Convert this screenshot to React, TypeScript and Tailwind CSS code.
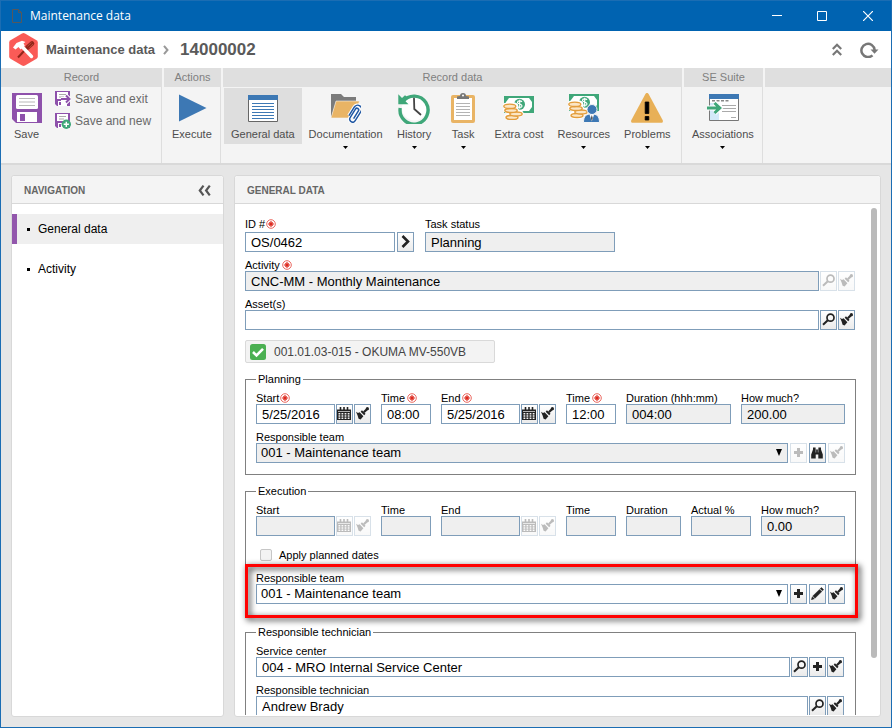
import React, { useId } from "react";

/* ---------- small glyphs used on field buttons ---------- */

function SearchIcon() {
  return (
    <svg width="13" height="13" viewBox="0 0 13 13" fill="none" stroke="currentColor">
      <circle cx="8.5" cy="4.7" r="3.5" strokeWidth="1.7" />
      <path d="M5.8 7.2 1 11.8" strokeWidth="2" />
    </svg>
  );
}

function BrushIcon() {
  return (
    <svg width="13" height="13" viewBox="0 0 13 13">
      <path d="M11.6 1.600 7.800 5.200" stroke="currentColor" strokeWidth="2.200" />
      <circle cx="11.400" cy="1.700" r="1.600" fill="currentColor" />
      <path d="M5.900 3.200 9.500 6.800 8.200 8.300 4.700 4.700Z" fill="currentColor" />
      <path d="M0 4.800 2 6 3.600 5.200 7.400 9.200 4.600 12.600 2.600 11.800 1.600 8.600Z" fill="currentColor" />
    </svg>
  );
}

function CalendarIcon() {
  return (
    <svg width="14" height="14" viewBox="0 0 14 14">
      <path d="M0 2.500h14V13H0z" fill="currentColor" />
      <path d="M3.500 0v3M7 0v3M10.500 0v3" stroke="currentColor" strokeWidth="1.600" />
      <path d="M1 4.500h12" stroke="#f4f4f4" strokeWidth=".7" />
      <path
        d="M1.500 6h1.800v1.400H1.500zM4.500 6h1.800v1.400H4.500zM7.600 6h1.800v1.400H7.600zM10.700 6h1.800v1.400H10.700zM1.500 8.300h1.800v1.400H1.500zM4.500 8.300h1.800v1.400H4.500zM7.600 8.300h1.800v1.400H7.600zM10.700 8.300h1.800v1.400H10.700zM1.500 10.600h1.800V12H1.500zM4.500 10.600h1.800V12H4.500zM7.600 10.600h1.800V12H7.600zM10.700 10.600h1.800V12H10.700z"
        fill="#f4f4f4"
      />
    </svg>
  );
}

function PlusIcon() {
  return (
    <svg width="9" height="9" viewBox="0 0 9 9">
      <path d="M3 0h3v3h3v3H6v3H3V6H0V3h3z" fill="currentColor" />
    </svg>
  );
}

function PencilIcon() {
  return (
    <svg width="13" height="13" viewBox="0 0 13 13">
      <path d="M10.4.6 12.6 2.6 11.5 3.8 9.2 1.7ZM8.5 2.4 10.8 4.6 4 11.2 1.8 9ZM1.3 9.8 3.3 11.7.4 12.7Z" fill="currentColor" stroke="currentColor" strokeWidth=".5" />
    </svg>
  );
}

function BinocularsIcon() {
  return (
    <svg width="12" height="12" viewBox="0 0 12 12">
      <path d="M2 .5h2.600v2h2.800v-2H10v2l1.800 5v4H7.300V7.500H4.700v4H.2v-4l1.800-5z" fill="currentColor" />
      <path d="M4.800 2.500v3M7.200 2.500v3" stroke="#f4f4f4" strokeWidth=".5" />
    </svg>
  );
}

function ChevronIcon() {
  return (
    <svg width="9" height="13" viewBox="0 0 9 13" fill="none">
      <path d="M1.500 1 7 6.500 1.500 12" stroke="currentColor" strokeWidth="2.600" />
    </svg>
  );
}

function Required() {
  return (
    <svg width="10" height="10" viewBox="0 0 10 10" className="mb-px shrink-0" aria-hidden="true">
      <circle cx="5" cy="5" r="4.300" fill="#fff" stroke="#e8574e" strokeWidth=".9" />
      <path d="M5 2v6M2 5h6M3.300 3.300l3.400 3.400M6.700 3.300 3.300 6.700" stroke="#dd2a1f" strokeWidth="1.100" />
    </svg>
  );
}

/* ---------- ribbon drawings ---------- */

function FloppyIcon() {
  return (
    <svg width="30" height="30" viewBox="0 0 30 30">
      <path d="M0 0h30v30H4L0 26z" fill="#8e51ab" />
      <rect x="4" y="2" width="22" height="14" rx="1.500" fill="#fff" />
      <path d="M7 5.500h16M7 9h16M7 12.500h16" stroke="#b9b9b9" strokeWidth="1" />
      <path d="M5 19h20v10H5z" fill="#fff" />
      <path d="M8 21h5v7H8z" fill="#8e51ab" />
    </svg>
  );
}

function SmallFloppy({ kind }: { kind: "exit" | "new" }) {
  return (
    <svg width="16" height="16" viewBox="0 0 16 16">
      <path d="M0 0h15v15H2l-2-2z" fill="#8e51ab" />
      <path d="M2 1h11v7H2zM3 10h9v5H3z" fill="#fff" />
      <path d="M4 3.500h7M4 6h5" stroke="#aaa" />
      <path d="M4 11h2v3H4z" fill="#8e51ab" />
      {kind === "exit" ? (
        <>
          <path d="M6 8h8M11 4.500 14.500 8 11 11.500" fill="none" stroke="#fff" strokeWidth="4" />
          <path d="M6 8h8M11 4.500 14.500 8 11 11.500" fill="none" stroke="#8e51ab" strokeWidth="2" />
        </>
      ) : (
        <>
          <circle cx="11.300" cy="11.300" r="4.700" fill="#3fa779" />
          <path d="M11.300 8.700v5.200M8.700 11.300h5.200" stroke="#fff" strokeWidth="1.400" />
        </>
      )}
    </svg>
  );
}

function PlayIcon() {
  return (
    <svg width="30" height="30" viewBox="0 0 30 30">
      <path d="M2 1.500 29.500 15 2 28.500z" fill="#3d78b4" />
    </svg>
  );
}

function DocIcon() {
  return (
    <svg width="30" height="30" viewBox="0 0 30 30">
      <path d="M.5 3.500h29v25H.5z" fill="#fff" stroke="#666" />
      <path d="M0 2h30v5H0z" fill="#3d78b4" />
      <path d="M4 10.500h22M4 13.500h22M4 16.500h22M4 19.500h22M4 22.500h22M4 25.500h22" stroke="#3d78b4" />
    </svg>
  );
}

function FolderIcon() {
  return (
    <svg width="30" height="30" viewBox="0 0 30 30">
      <path d="M0 25V1h10l3 3h12v5H5z" fill="#7b7b7b" />
      <path d="M5 8h23.500L23 25H0z" fill="#e9b465" stroke="#f4f4f4" strokeWidth=".6" />
      <g transform="translate(24 20.500) rotate(32)" fill="none">
        <path d="M-4 5V-5a4 4 0 0 1 8 0V6a3 3 0 0 1-6 0V-4a1.500 1.500 0 0 1 3.500 0V5" stroke="#fff" strokeWidth="3.600" />
        <path d="M-4 5V-5a4 4 0 0 1 8 0V6a3 3 0 0 1-6 0V-4a1.500 1.500 0 0 1 3.500 0V5" stroke="#1f57a3" strokeWidth="1.500" />
      </g>
    </svg>
  );
}

function HistoryIcon() {
  return (
    <svg width="32" height="32" viewBox="0 0 32 32">
      <circle cx="16.500" cy="16" r="12.500" fill="#fff" />
      <path d="M5 9.500A14 14 0 1 1 2.200 16" fill="none" stroke="#3fa779" strokeWidth="3.400" />
      <path d="M.3 2.200V12.300H10.500L7.200 9 10 5.500 7 3.200 4 6z" fill="#3fa779" />
      <path d="M16 6.500 16.300 17 22.500 22.500" fill="none" stroke="#444" strokeWidth="1.800" strokeLinecap="round" />
    </svg>
  );
}

function ClipboardIcon() {
  return (
    <svg width="24" height="30" viewBox="0 0 24 30">
      <rect y="2" width="24" height="28" rx="2" fill="#e9b465" />
      <path d="M3 5h18v22H3z" fill="#fff" />
      <path d="M5 10.500h14M5 13.500h14M5 16.500h14M5 19.500h14M5 22.500h14" stroke="#b4b4b4" />
      <path d="M6 6V3.500l3-.5a3 3 0 0 1 6 0l3 .5V6z" fill="#777" />
      <circle cx="12" cy="2.500" r="1" fill="#fff" />
    </svg>
  );
}

function MoneyShape() {
  return (
    <>
      <path d="M1 0h30v17H1z" fill="#3fa779" />
      <path d="M6 2h20l3 4v5l-3 4H6l-3-4V6z" fill="#fff" />
      <circle cx="16.500" cy="8.300" r="5.500" fill="#3fa779" />
      <path d="M19 5.800c-1-1.300-4.500-1.300-4.500.6 0 2 4.500 1.300 4.500 3.500 0 2-4 2-5 .5M16.700 3.800v9" fill="none" stroke="#fff" strokeWidth="1.200" />
      <g fill="#f4c583" stroke="#fff" strokeWidth="2.200">
        <ellipse cx="7.500" cy="10" rx="6.800" ry="2.800" />
        <ellipse cx="8" cy="14" rx="6.800" ry="2.800" />
        <ellipse cx="13" cy="17.500" rx="6.500" ry="2.800" />
        <ellipse cx="9" cy="21" rx="6.500" ry="2.800" />
      </g>
      <g fill="#fbe6c6" stroke="#e39d3c" strokeWidth="1.400">
        <ellipse cx="9" cy="21.500" rx="6" ry="2" />
        <ellipse cx="13" cy="18" rx="6.200" ry="2" />
        <ellipse cx="8" cy="14.500" rx="6.200" ry="2" />
        <ellipse cx="6.800" cy="10.300" rx="6" ry="2.200" />
      </g>
    </>
  );
}

function MoneyIcon() {
  return (
    <svg width="32" height="24" viewBox="0 0 32 24">
      <MoneyShape />
    </svg>
  );
}

function ResourcesIcon() {
  return (
    <svg width="32" height="30" viewBox="0 0 32 30">
      <g transform="translate(0 1)">
        <MoneyShape />
      </g>
      <g stroke="#f4f4f4" strokeWidth="1">
        <path d="M15.500 29.500c0-7 3-8.500 8-8.500s8 1.500 8 8.500z" fill="#3d78b4" />
        <circle cx="24" cy="16.500" r="5" fill="#3d78b4" />
      </g>
      <path d="m21.500 21.500 2.300 7 2.300-7z" fill="#fff" />
      <path d="m23.800 22 1 3-1 3-1-3z" fill="#555" />
    </svg>
  );
}

function WarningIcon() {
  return (
    <svg width="32" height="30" viewBox="0 0 32 30">
      <path d="M16 0c.8 0 1.300.5 1.600 1l14 26c.8 1.500 0 2.700-1.500 2.700H1.900C.4 29.700-.4 28.500.4 27l14-26c.3-.5.8-1 1.600-1z" fill="#e8b057" />
      <path d="M14.200 9h3.600v11.500h-3.600zM14.200 23.500h3.600V27h-3.600z" fill="#000" stroke="#000" strokeWidth=".8" strokeLinejoin="round" />
    </svg>
  );
}

function AssociationsIcon() {
  return (
    <svg width="34" height="30" viewBox="0 0 34 30">
      <path d="M3.500 2.500h29v25h-29z" fill="#fff" stroke="#777" />
      <path d="M4 10h9v17H4z" fill="#d3e9f8" />
      <path d="M3 1h30v5H3z" fill="#3d78b4" />
      <path d="M6 7.700h17" stroke="#888" strokeWidth="1.500" strokeDasharray="3 1.500" />
      <path d="M16 12.500h14M16 15.500h14M16 18.500h14M25 24.500h5" stroke="#aaa" />
      <path d="M1 15h11M8.500 10l5.300 5-5.300 5" fill="none" stroke="#fff" strokeWidth="5" />
      <path d="M1 15h11M8.500 10l5.300 5-5.300 5" fill="none" stroke="#3fa779" strokeWidth="3" />
    </svg>
  );
}

function AppLogo() {
  return (
    <svg width="29" height="33" viewBox="0 0 29 33">
      <path d="M13 .5q1.500-.8 3 0l11.500 6.700q1.300.8 1.300 2.300v14q0 1.500-1.300 2.300L16 32.500q-1.500.8-3 0L1.500 25.800Q.2 25 .2 23.500v-14Q.2 8 1.500 7.200z" fill="#fa5b57" />
      <path d="M9 24.500 21 11.500" stroke="#93251a" strokeWidth="2" />
      <path d="M18.500 14.500 23 10.500" stroke="#93251a" strokeWidth="4.600" strokeLinecap="round" />
      <path d="m18.300 13.500 4-4M20 15.300l4-4.300" stroke="#c5523e" strokeWidth=".8" />
      <path d="M12.500 13 22.500 23.500" stroke="#fff" strokeWidth="3.400" strokeLinecap="round" />
      <path d="M4 14.500 7.500 10 13 7.800 16.500 9 14.500 10.500 15.800 12.500 11.500 16.500 9.500 14 6.500 16.500z" fill="#fff" />
    </svg>
  );
}

/* ---------- ribbon pieces ---------- */

function RibbonGroup({ title, className, children }: { title?: string; className: string; children?: React.ReactNode }) {
  return (
    <section className={`flex flex-col ${className}`}>
      <h2 className="h-[19px] bg-[#dfdfdf] text-center text-[11px] leading-[19px] text-[#808080]">{title}</h2>
      <div className="flex flex-1 items-start border-r border-[#dedede] px-px pt-px">{children}</div>
    </section>
  );
}

function RibbonButton({ label, icon, menu, active }: { label: string; icon: React.ReactNode; menu?: boolean; active?: boolean }) {
  return (
    <button
      type="button"
      className={`flex min-w-[49px] shrink-0 flex-col items-center px-[7px] pt-[5px] pb-[3px] text-[11px] leading-[14px] whitespace-nowrap text-[#4d4d4d] ${active ? "bg-[#dedede]" : ""}`}
    >
      <span className="flex h-[30px] items-center justify-center">{icon}</span>
      <span className="mt-1">{label}</span>
      {menu && (
        <svg width="5" height="3" viewBox="0 0 5 3" className="mt-[5px]" aria-hidden="true">
          <path d="M0 0h5L2.500 3z" fill="#000" />
        </svg>
      )}
    </button>
  );
}

/* ---------- form pieces ---------- */

function IconButton({ label, disabled, children }: { label: string; disabled?: boolean; children: React.ReactNode }) {
  return (
    <button
      type="button"
      aria-label={label}
      disabled={disabled}
      className="flex h-5 w-[17px] shrink-0 items-center justify-center overflow-hidden border border-[#7f9db9] bg-linear-to-b from-white to-[#ebebeb] pr-px pb-px text-[#222] disabled:opacity-30"
    >
      {children}
    </button>
  );
}

type FieldProps = {
  label: string;
  value?: string;
  required?: boolean;
  spaced?: boolean;
  loose?: boolean;
  readOnly?: boolean;
  select?: boolean;
  width?: string;
  inputWidth?: string;
  gap?: string;
  children?: React.ReactNode;
};

function Field({ label, value = "", required, spaced, loose, readOnly, select, width = "", inputWidth = "flex-1", gap = "gap-px", children }: FieldProps) {
  const id = useId();
  const look = "h-5 w-full rounded-none border border-[#7f9db9] text-[13px] leading-[18px] text-black outline-none";
  const fill = readOnly ? "bg-[#efefef]" : "bg-white";
  return (
    <div className={`min-w-0 ${width}`}>
      <label
        htmlFor={id}
        className={`flex h-[14px] items-center pt-[2px] text-[11px] leading-[14px] whitespace-nowrap ${spaced ? "gap-[2px]" : "gap-px"} ${loose ? "mb-[2px]" : ""}`}
      >
        {label}
        {required && <Required />}
      </label>
      <div className={`flex ${gap}`}>
        {select ? (
          <span className={`relative min-w-0 ${inputWidth}`}>
            <select id={id} className={`block appearance-none px-1 disabled:opacity-100 ${look} ${fill}`} defaultValue={value} disabled={readOnly}>
              <option>{value}</option>
            </select>
            <svg width="6" height="7" viewBox="0 0 6 7" className="pointer-events-none absolute top-[6px] right-[6px]" aria-hidden="true">
              <path d="M0 0h6L3 7z" fill="#000" />
            </svg>
          </span>
        ) : (
          <span className={`min-w-0 ${inputWidth}`}>
            <input id={id} type="text" defaultValue={value} readOnly={readOnly} className={`block px-[5px] ${look} ${fill}`} />
          </span>
        )}
        {children}
      </div>
    </div>
  );
}

function DateField({ label, value, required, disabled }: { label: string; value?: string; required?: boolean; disabled?: boolean }) {
  return (
    <Field label={label} value={value} required={required} readOnly={disabled} inputWidth="w-[79px]">
      <IconButton label={`${label} calendar`} disabled={disabled}>
        <CalendarIcon />
      </IconButton>
      <IconButton label={`Clear ${label}`} disabled={disabled}>
        <BrushIcon />
      </IconButton>
    </Field>
  );
}

function Group({ legend, children }: { legend: string; children: React.ReactNode }) {
  return (
    <fieldset className="mt-[9px] min-w-0 border border-[#808080] px-[10px] pt-[3px] pb-[11px]">
      <legend className="px-[2px] text-[11px] leading-[15px]">{legend}</legend>
      {children}
    </fieldset>
  );
}

function PanelTitle({ children }: { children: React.ReactNode }) {
  return (
    <div className="flex h-7 shrink-0 items-center justify-between rounded-t-[3px] border-b border-[#d8d8d8] bg-[#f4f4f4] px-3 pt-[2px] text-[10px] font-bold text-[#666]">
      {children}
    </div>
  );
}

export default function App() {
  return (
    <div className="flex h-screen flex-col overflow-hidden border border-t-0 border-[#1b6db3] bg-[#e6e6e6] font-['Liberation_Sans',Arial,sans-serif] text-black">
      <header className="flex h-[31px] shrink-0 items-center border-t border-[#1b6db3] bg-[#0063b1] pl-[11px] text-white">
        <svg width="10" height="14" viewBox="0 0 10 14" fill="none" stroke="#55585c" aria-hidden="true">
          <path d="M.5.5h6l3 3v10h-9zM6.500.5v3h3" />
        </svg>
        <h1 className="ml-2 flex-1 font-['Open_Sans','Noto_Sans',sans-serif] text-[12px] leading-4">Maintenance data</h1>
        <button type="button" aria-label="Minimize" className="flex h-full w-[45px] items-center justify-center">
          <svg width="10" height="10" viewBox="0 0 10 10"><path d="M0 4.500h10" stroke="#fff" /></svg>
        </button>
        <button type="button" aria-label="Maximize" className="flex h-full w-[45px] items-center justify-center">
          <svg width="10" height="10" viewBox="0 0 10 10"><path d="M.5.5h9v9h-9z" fill="none" stroke="#fff" /></svg>
        </button>
        <button type="button" aria-label="Close" className="flex h-full w-[47px] items-center justify-center">
          <svg width="10" height="10" viewBox="0 0 10 10"><path d="m0 0 10 10M10 0 0 10" stroke="#fff" strokeWidth="1.200" /></svg>
        </button>
      </header>

      <div className="flex h-[37px] shrink-0 items-center bg-white pr-3 pl-2 font-bold text-[#5a5a5a]">
        <AppLogo />
        <span className="ml-2 pt-px text-[13px] leading-4">Maintenance data</span>
        <svg width="6" height="10" viewBox="0 0 6 10" className="mr-[11px] ml-2" fill="none" aria-hidden="true">
          <path d="M1 .8 4.500 5 1 9.200" stroke="#999" strokeWidth="2" />
        </svg>
        <span className="flex-1 text-[17px] leading-5">14000002</span>
        <button type="button" aria-label="Collapse ribbon">
          <svg width="10" height="13" viewBox="0 0 10 13" fill="none" stroke="#777" strokeWidth="2.200">
            <path d="M.8 6 5 1.800 9.200 6M.8 12 5 7.800 9.200 12" />
          </svg>
        </button>
        <button type="button" aria-label="Refresh" className="ml-[18px]">
          <svg width="19" height="16" viewBox="0 0 19 16">
            <path d="M12.500 13.300A6.600 6.600 0 1 1 14.600 8" fill="none" stroke="#777" strokeWidth="2.500" />
            <path d="M10.500 7.500h8l-4 4.300z" fill="#777" />
          </svg>
        </button>
      </div>

      <nav aria-label="Ribbon" className="flex h-[97px] shrink-0 gap-[2px] border-b-2 border-[#d9d9d9] bg-[#f4f4f4]">
        <RibbonGroup title="Record" className="w-[161px] shrink-0">
          <RibbonButton label="Save" icon={<FloppyIcon />} />
          <div className="mt-[3px] ml-1 flex flex-col gap-[6px] text-[12px] leading-4 whitespace-nowrap text-[#6a6a6a]">
            <button type="button" className="flex items-center gap-1"><SmallFloppy kind="exit" />Save and exit</button>
            <button type="button" className="flex items-center gap-1"><SmallFloppy kind="new" />Save and new</button>
          </div>
        </RibbonGroup>
        <RibbonGroup title="Actions" className="w-[57px] shrink-0">
          <RibbonButton label="Execute" icon={<PlayIcon />} />
        </RibbonGroup>
        <RibbonGroup title="Record data" className="w-[459px] shrink-0">
          <RibbonButton label="General data" icon={<DocIcon />} active />
          <RibbonButton label="Documentation" icon={<FolderIcon />} menu />
          <RibbonButton label="History" icon={<HistoryIcon />} menu />
          <RibbonButton label="Task" icon={<ClipboardIcon />} menu />
          <RibbonButton label="Extra cost" icon={<MoneyIcon />} />
          <RibbonButton label="Resources" icon={<ResourcesIcon />} menu />
          <RibbonButton label="Problems" icon={<WarningIcon />} menu />
        </RibbonGroup>
        <RibbonGroup title="SE Suite" className="w-[79px] shrink-0">
          <RibbonButton label="Associations" icon={<AssociationsIcon />} menu />
        </RibbonGroup>
        <div className="h-[19px] flex-1 bg-[#dfdfdf]" />
      </nav>

      <div className="flex min-h-0 flex-1 gap-[10px] p-[10px]">
        <aside className="flex w-[213px] shrink-0 flex-col rounded-[3px] border border-[#d8d8d8] bg-white">
          <PanelTitle>
            <h2>NAVIGATION</h2>
            <button type="button" aria-label="Collapse navigation">
              <svg width="13" height="11" viewBox="0 0 13 11" fill="none" stroke="#555" strokeWidth="2.200">
                <path d="M5.500.7 1.800 5.500l3.700 4.800M11.800.7 8.100 5.500l3.700 4.800" />
              </svg>
            </button>
          </PanelTitle>
          <ul className="flex flex-col gap-[10px] pt-[10px] text-[12px]">
            <li>
              <a href="#general" className="flex h-[30px] items-center gap-2 border-l-[5px] border-[#9257ac] bg-[#efefef] pl-[10px]">
                <span className="size-[3px] bg-black" />General data
              </a>
            </li>
            <li>
              <a href="#activity" className="flex h-[30px] items-center gap-2 border-l-[5px] border-transparent pl-[10px]">
                <span className="size-[3px] bg-black" />Activity
              </a>
            </li>
          </ul>
        </aside>

        <main className="flex min-w-0 flex-1 flex-col rounded-[3px] border border-[#d8d8d8] bg-white">
          <PanelTitle>
            <h2>GENERAL DATA</h2>
          </PanelTitle>
          <div className="mb-px flex min-h-0 flex-1 overflow-hidden pr-[3px]">
            <form className="min-w-0 flex-1 pt-3 pr-[15px] pl-[10px]">
              <div className="flex gap-[11px]">
                <Field label="ID #" value="OS/0462" required loose inputWidth="w-[150px]" gap="gap-[2px]">
                  <IconButton label="Open record"><ChevronIcon /></IconButton>
                </Field>
                <Field label="Task status" value="Planning" loose readOnly width="w-[190px]" />
              </div>
              <div className="mt-[5px] flex flex-col gap-[5px] pr-px">
                <Field label="Activity" value="CNC-MM - Monthly Maintenance" required spaced readOnly>
                  <IconButton label="Search activity" disabled><SearchIcon /></IconButton>
                  <IconButton label="Clear activity" disabled><BrushIcon /></IconButton>
                </Field>
                <Field label="Asset(s)">
                  <IconButton label="Search asset"><SearchIcon /></IconButton>
                  <IconButton label="Clear asset"><BrushIcon /></IconButton>
                </Field>
              </div>
              <div className="mt-[10px] flex h-[23px] w-[250px] items-center gap-2 rounded-[2px] border border-[#d9d9d9] bg-[#f3f3f3] pl-1 text-[12px] text-[#444]">
                <svg width="16" height="16" viewBox="0 0 16 16" aria-hidden="true">
                  <rect width="16" height="16" rx="2.500" fill="#4bb052" />
                  <path d="m3 8 3.500 3.500L13 4.800" fill="none" stroke="#fff" strokeWidth="2.600" />
                </svg>
                001.01.03-015 - OKUMA MV-550VB
              </div>

              <Group legend="Planning">
                <div className="flex gap-[10px]">
                  <DateField label="Start" value="5/25/2016" required />
                  <Field label="Time" value="08:00" required spaced width="w-[50px]" />
                  <DateField label="End" value="5/25/2016" required />
                  <Field label="Time" value="12:00" required spaced width="w-[50px]" />
                  <Field label="Duration (hhh:mm)" value="004:00" readOnly width="w-[105px]" />
                  <Field label="How much?" value="200.00" readOnly width="flex-1" />
                </div>
                <div className="mt-[5px]">
                  <Field label="Responsible team" value="001 - Maintenance team" select readOnly gap="gap-[2px]">
                    <IconButton label="Add team" disabled><PlusIcon /></IconButton>
                    <IconButton label="View team"><BinocularsIcon /></IconButton>
                    <IconButton label="Clear team" disabled><BrushIcon /></IconButton>
                  </Field>
                </div>
              </Group>

              <Group legend="Execution">
                <div className="flex gap-[10px]">
                  <DateField label="Start" disabled />
                  <Field label="Time" readOnly width="w-[50px]" />
                  <DateField label="End" disabled />
                  <Field label="Time" readOnly width="w-[50px]" />
                  <Field label="Duration" readOnly width="w-[55px]" />
                  <Field label="Actual %" readOnly width="w-[60px]" />
                  <Field label="How much?" value="0.00" readOnly width="flex-1" />
                </div>
                <label className="mt-3 ml-1 flex h-[14px] w-fit items-center gap-[7px] text-[11px] leading-[14px]">
                  <input type="checkbox" disabled className="size-3 appearance-none rounded-[2px] border border-[#c6c6c6] bg-[#f3f3f3]" />
                  Apply planned dates
                </label>
                <div className="relative mt-2">
                  <Field label="Responsible team" value="001 - Maintenance team" select gap="gap-[2px]">
                    <IconButton label="Add team"><PlusIcon /></IconButton>
                    <IconButton label="Edit team"><PencilIcon /></IconButton>
                    <IconButton label="Clear team"><BrushIcon /></IconButton>
                  </Field>
                  <div className="pointer-events-none absolute -top-[6px] -right-[13px] -bottom-[14px] -left-[11px] border-[3px] border-[#f00] drop-shadow-[2px_2px_3px_rgba(0,0,0,0.9)]" />
                </div>
              </Group>

              <Group legend="Responsible technician">
                <div className="flex flex-col gap-[5px] pr-px">
                  <Field label="Service center" value="004 - MRO Internal Service Center">
                    <IconButton label="Search service center"><SearchIcon /></IconButton>
                    <IconButton label="Add service center"><PlusIcon /></IconButton>
                    <IconButton label="Clear service center"><BrushIcon /></IconButton>
                  </Field>
                  <Field label="Responsible technician" value="Andrew Brady">
                    <IconButton label="Search technician"><SearchIcon /></IconButton>
                    <IconButton label="Clear technician"><BrushIcon /></IconButton>
                  </Field>
                </div>
              </Group>
            </form>
            <div className="mt-1 h-[88%] w-[6px] shrink-0 rounded-full bg-[#bababa]" />
          </div>
        </main>
      </div>
    </div>
  );
}
